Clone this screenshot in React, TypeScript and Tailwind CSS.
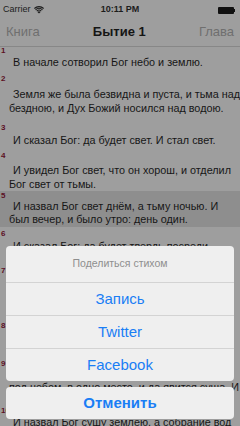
import React from "react";

type Verse = { n: number; lines: string[]; numMt: number; textMt: number; pb: number; hl?: boolean; lh?: number };

const verses: Verse[] = [
  { n: 1, lines: ["В начале сотворил Бог небо и землю."], numMt: 0, textMt: 0, pb: 6 },
  { n: 2, lines: ["Земля же была безвидна и пуста, и тьма над", "бездною, и Дух Божий носился над водою."], numMt: 0, textMt: 4, pb: 9 },
  { n: 3, lines: ["И сказал Бог: да будет свет. И стал свет."], numMt: 0, textMt: 1, pb: 5 },
  { n: 4, lines: ["И увидел Бог свет, что он хорош, и отделил", "Бог свет от тьмы."], numMt: 0, textMt: 3, pb: 0 },
  { n: 5, lines: ["И назвал Бог свет днём, а тьму ночью. И", "был вечер, и было утро: день один."], numMt: 1, textMt: 0, pb: 1, hl: true, lh: 13 },
  { n: 6, lines: ["И сказал Бог: да будет твердь посреди", "воды, и да отделяет она воду от воды."], numMt: 3, textMt: 1, pb: 0 },
  { n: 7, lines: ["И создал Бог твердь, и отделил воду,", "которая под твердью, от воды, которая", "над твердью. И стало так."], numMt: 0, textMt: 3, pb: 2 },
  { n: 8, lines: ["И назвал Бог твердь небом. И был вечер,", "и было утро: день второй."], numMt: 0, textMt: 2, pb: 0 },
  { n: 9, lines: ["И сказал Бог: да соберется вода, которая", "под небом, в одно место, и да явится суша. И", "стало так."], numMt: 0, textMt: 0, pb: 0, lh: 13 },
  { n: 10, lines: ["И назвал Бог сушу землёю, а собрание вод"], numMt: 0, textMt: 0, pb: 0 },
];

function Wifi() {
  return (
    <svg width="10" height="8" viewBox="0 0 18 14">
      <path d="M9 13.5 L6.2 10.4 A4 4 0 0 1 11.8 10.4 Z" fill="#1a1a1a" />
      <path d="M4.3 8.3 A6.8 6.8 0 0 1 13.7 8.3 L12.4 9.7 A5 5 0 0 0 5.6 9.7 Z" fill="#1a1a1a" />
      <path d="M2.1 5.9 A10 10 0 0 1 15.9 5.9 L14.6 7.3 A8.2 8.2 0 0 0 3.4 7.3 Z" fill="#1a1a1a" />
      <path d="M0 3.6 A13 13 0 0 1 18 3.6 L16.7 5 A11.2 11.2 0 0 0 1.3 5 Z" fill="#1a1a1a" />
    </svg>
  );
}

export default function App() {
  return (
    <div
      className="relative w-[240px] h-[426px] overflow-hidden bg-[#9e9e9e] text-[#161616]"
      style={{ fontFamily: '"Liberation Sans", Arial, sans-serif' }}
    >
      {/* status bar */}
      <div className="h-[20px] flex items-center justify-between px-[3px] text-[9px] text-[#1c1c1c]">
        <div className="flex items-center gap-[3px] w-[60px]">
          <span>Carrier</span>
          <Wifi />
        </div>
        <div className="font-bold">10:11 PM</div>
        <div className="w-[60px] flex justify-end items-center pr-[2px]">
          <div className="w-[16px] h-[7px] bg-[#111] rounded-[1px]" />
          <div className="w-[1.5px] h-[3px] bg-[#111]" />
        </div>
      </div>
      {/* nav bar */}
      <div className="h-[27px] flex items-center justify-between px-[6px] pb-[2px] border-b border-[#878787]">
        <span className="text-[13px] text-[#6f6f6f]">Книга</span>
        <span className="text-[13px] font-bold text-[#151515]">Бытие 1</span>
        <span className="text-[13px] text-[#6f6f6f]">Глава</span>
      </div>
      {/* verses */}
      <div className="flex flex-col">
        {verses.map((v) => (
          <div
            key={v.n}
            className={v.hl ? "bg-[#8e8e8e]" : ""}
            style={{ paddingBottom: v.pb }}
          >
            <div
              className="h-[8px] leading-[8px] text-[8px] font-bold text-[#5c0f24] pl-[1px]"
              style={{ marginTop: v.numMt }}
            >
              {v.n}
            </div>
            <div
              className="pl-[9px] text-[10.8px] whitespace-nowrap"
              style={{ marginTop: v.textMt, lineHeight: `${v.lh ?? 14}px` }}
            >
              {v.lines.map((l, i) => (
                <div key={i} className={i === 0 ? "pl-[4px]" : ""}>
                  {l}
                </div>
              ))}
            </div>
          </div>
        ))}
      </div>
      {/* action sheet */}
      <div className="absolute left-[6px] right-[6px] bottom-[7px] flex flex-col gap-[6px]">
        <div className="rounded-[4px] bg-[#efefef] overflow-hidden flex flex-col">
          <div className="h-[36px] flex items-center justify-center text-[10.5px] text-[#8e8e8e]">
            Поделиться стихом
          </div>
          <div className="h-[33px] flex items-center justify-center border-t border-[#d3d3d3] text-[15px] text-[#1a7ef5]">
            Запись
          </div>
          <div className="h-[33px] flex items-center justify-center border-t border-[#d3d3d3] text-[15px] text-[#1a7ef5]">
            Twitter
          </div>
          <div className="h-[33px] flex items-center justify-center border-t border-[#d3d3d3] text-[15px] text-[#1a7ef5]">
            Facebook
          </div>
        </div>
        <div className="h-[32px] rounded-[4px] bg-[#efefef] flex items-center justify-center text-[15px] font-bold text-[#1a7ef5]">
          Отменить
        </div>
      </div>
    </div>
  );
}
